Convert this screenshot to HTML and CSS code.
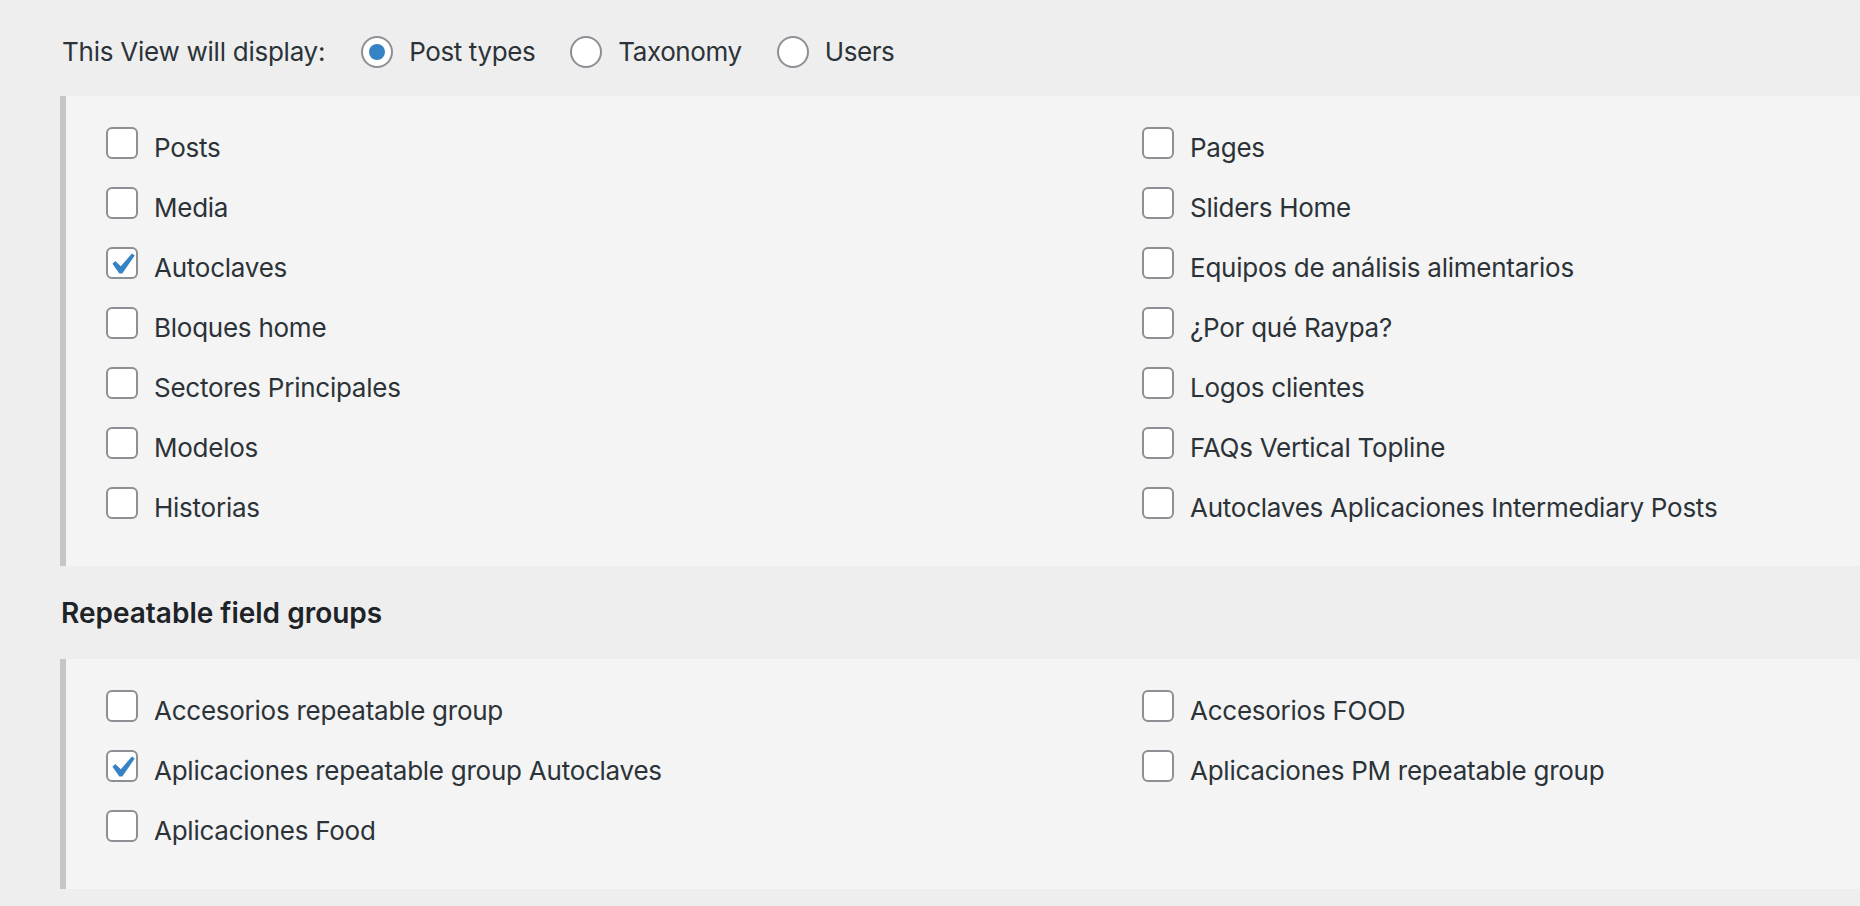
FILE: index.html
```html
<!DOCTYPE html>
<html lang="en">
<head>
<meta charset="utf-8">
<title>View settings</title>
<link rel="stylesheet" href="styles.css">
</head>
<body>
<div class="page">
  <div class="display-row">
    <span class="display-label">This View will display:</span>
    <label class="radio-opt"><span class="radio is-checked"></span><span class="opt-text">Post types</span></label>
    <label class="radio-opt"><span class="radio"></span><span class="opt-text">Taxonomy</span></label>
    <label class="radio-opt"><span class="radio"></span><span class="opt-text">Users</span></label>
  </div>

  <div class="panel">
    <ul class="check-grid">
      <li class="check-item"><span class="checkbox"></span><span class="check-label">Posts</span></li>
      <li class="check-item"><span class="checkbox"></span><span class="check-label">Pages</span></li>
      <li class="check-item"><span class="checkbox"></span><span class="check-label">Media</span></li>
      <li class="check-item"><span class="checkbox"></span><span class="check-label">Sliders Home</span></li>
      <li class="check-item"><span class="checkbox is-checked"><svg viewBox="0 0 20 20" aria-hidden="true"><path d="M14.83 4.89l1.34.94-5.81 8.38H9.02L5.78 9.67l1.34-1.25 2.57 2.4z"/></svg></span><span class="check-label">Autoclaves</span></li>
      <li class="check-item"><span class="checkbox"></span><span class="check-label">Equipos de análisis alimentarios</span></li>
      <li class="check-item"><span class="checkbox"></span><span class="check-label">Bloques home</span></li>
      <li class="check-item"><span class="checkbox"></span><span class="check-label">¿Por qué Raypa?</span></li>
      <li class="check-item"><span class="checkbox"></span><span class="check-label">Sectores Principales</span></li>
      <li class="check-item"><span class="checkbox"></span><span class="check-label">Logos clientes</span></li>
      <li class="check-item"><span class="checkbox"></span><span class="check-label">Modelos</span></li>
      <li class="check-item"><span class="checkbox"></span><span class="check-label">FAQs Vertical Topline</span></li>
      <li class="check-item"><span class="checkbox"></span><span class="check-label">Historias</span></li>
      <li class="check-item"><span class="checkbox"></span><span class="check-label">Autoclaves Aplicaciones Intermediary Posts</span></li>
    </ul>
  </div>

  <h3 class="group-title">Repeatable field groups</h3>

  <div class="panel">
    <ul class="check-grid">
      <li class="check-item"><span class="checkbox"></span><span class="check-label">Accesorios repeatable group</span></li>
      <li class="check-item"><span class="checkbox"></span><span class="check-label">Accesorios FOOD</span></li>
      <li class="check-item"><span class="checkbox is-checked"><svg viewBox="0 0 20 20" aria-hidden="true"><path d="M14.83 4.89l1.34.94-5.81 8.38H9.02L5.78 9.67l1.34-1.25 2.57 2.4z"/></svg></span><span class="check-label">Aplicaciones repeatable group Autoclaves</span></li>
      <li class="check-item"><span class="checkbox"></span><span class="check-label">Aplicaciones PM repeatable group</span></li>
      <li class="check-item"><span class="checkbox"></span><span class="check-label">Aplicaciones Food</span></li>
    </ul>
  </div>
</div>
</body>
</html>
```

FILE: styles.css
```css
html, body {
  margin: 0;
  background: #eeeeee;
}

body {
  font-family: Inter, "Noto Sans", sans-serif;
  color: #2c3338;
  font-size: 26px;
  letter-spacing: -0.25px;
}

.page {
  padding: 36px 0 17px 60px;
}

/* top row: "This View will display" + radio options */
.display-row {
  display: flex;
  align-items: flex-start;
  height: 32px;
}

.display-label {
  line-height: 32px;
  padding-left: 2px;
  margin-right: 36px;
}

.radio-opt {
  display: flex;
  align-items: flex-start;
  gap: 16px;
  margin-right: 35px;
}

.opt-text {
  line-height: 32px;
  letter-spacing: -0.4px;
}

.radio {
  flex: none;
  width: 32px;
  height: 32px;
  box-sizing: border-box;
  border: 2px solid #8c8f94;
  border-radius: 50%;
  background: #fff;
  display: flex;
  align-items: center;
  justify-content: center;
}

.radio.is-checked::before {
  content: "";
  width: 16px;
  height: 16px;
  border-radius: 50%;
  background: #3582c4;
}

/* grey boxes holding the checkbox lists */
.panel {
  margin-top: 28px;
  background: #f4f4f4;
  border-left: 6px solid #c6c6c6;
  padding: 31px 0 19px 40px;
}

.check-grid {
  list-style: none;
  margin: 0;
  padding: 0;
  display: grid;
  grid-template-columns: 1036px 1fr;
  grid-auto-rows: 60px;
}

.check-item {
  display: flex;
  align-items: flex-start;
  gap: 16px;
}

.checkbox {
  position: relative;
  flex: none;
  width: 32px;
  height: 32px;
  box-sizing: border-box;
  border: 2px solid #8c8f94;
  border-radius: 6px;
  background: #fff;
}

.checkbox svg {
  position: absolute;
  left: -8px;
  top: -6px;
  width: 43px;
  height: 43px;
  fill: #3582c4;
}

.check-label {
  line-height: 32px;
  padding-top: 5px;
  white-space: nowrap;
}

.group-title {
  margin: 29px 0 0;
  font-size: 28px;
  line-height: 36px;
  font-weight: 600;
  color: #1d2327;
  padding-left: 1px;
  letter-spacing: 0;
}

.group-title + .panel {
  margin-top: 28px;
}
```
